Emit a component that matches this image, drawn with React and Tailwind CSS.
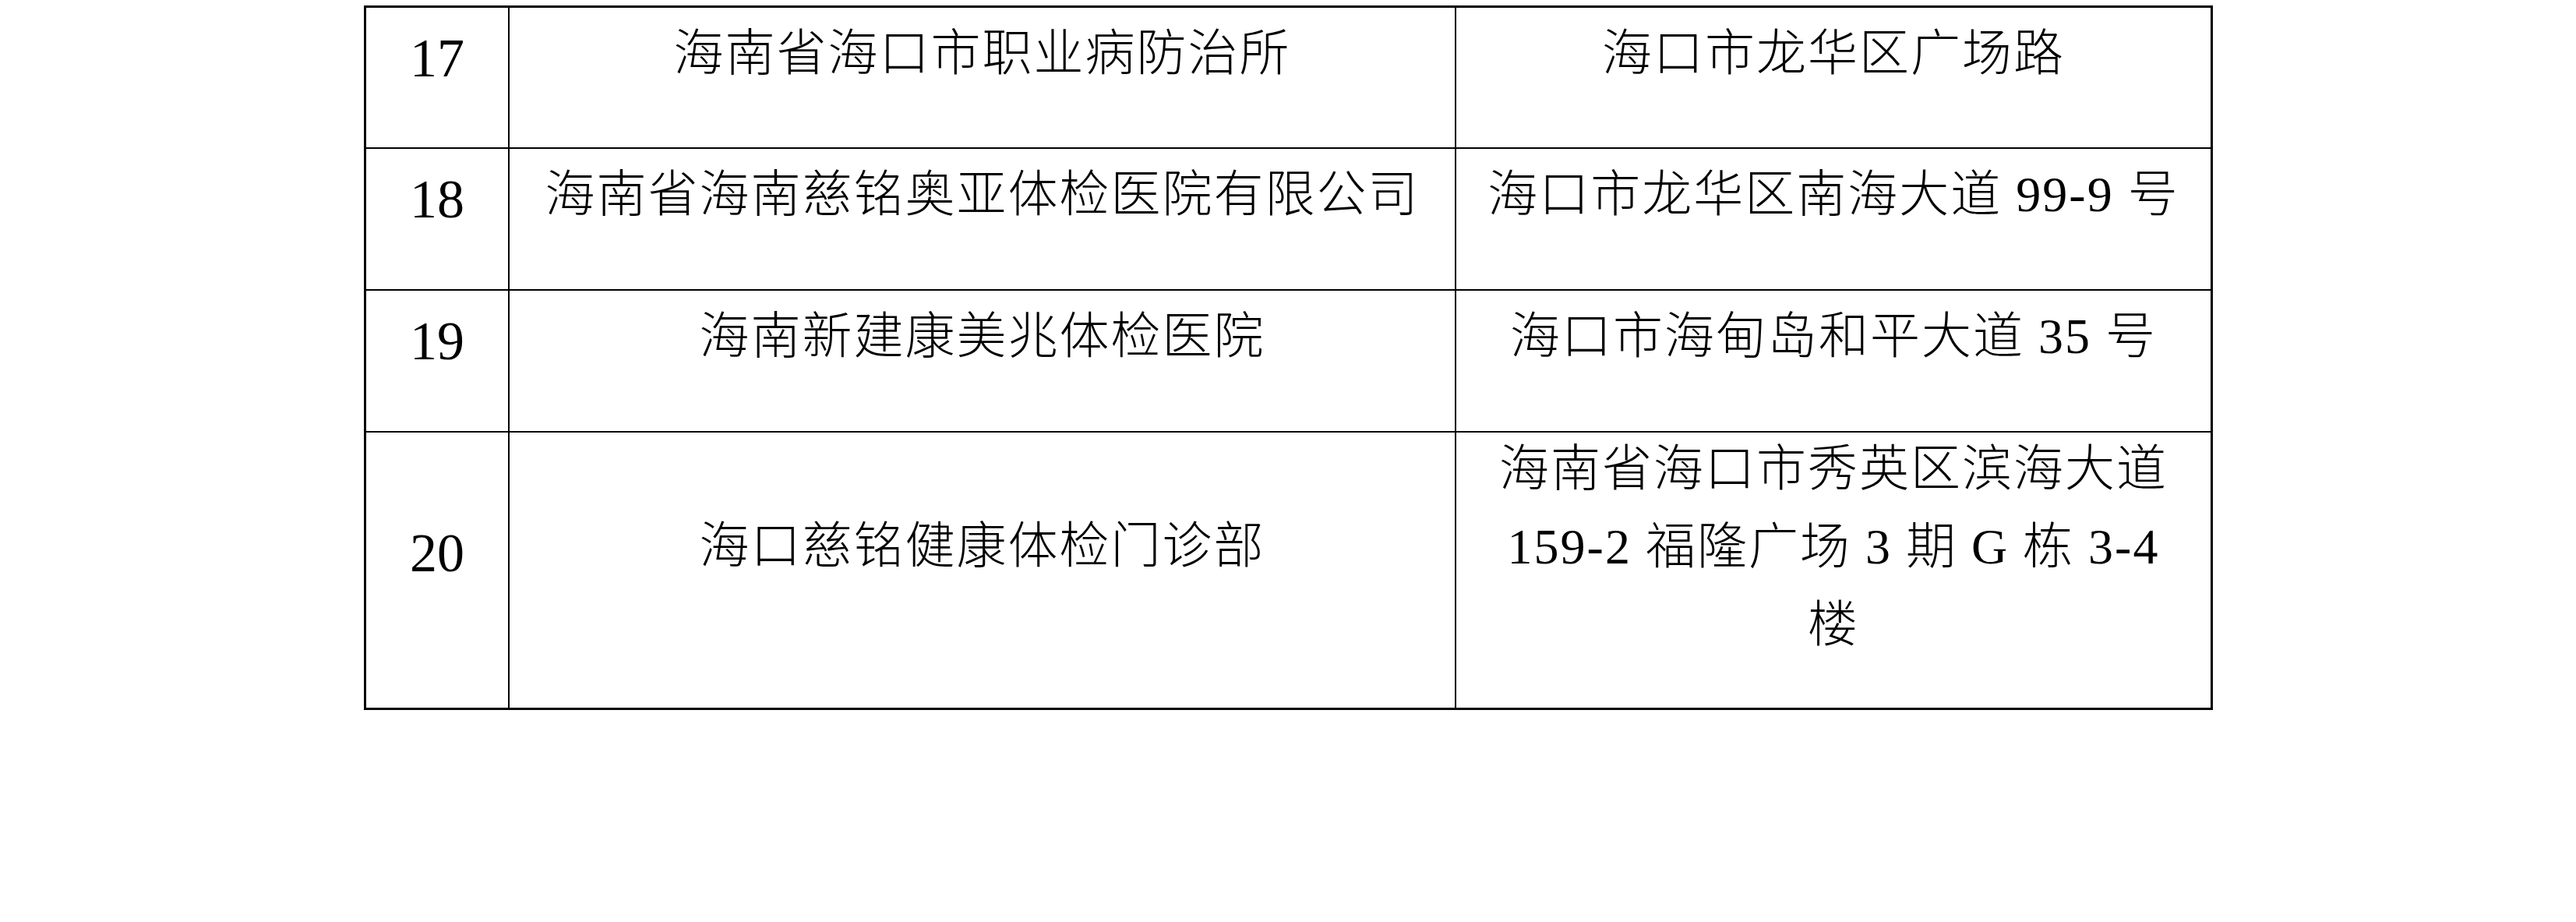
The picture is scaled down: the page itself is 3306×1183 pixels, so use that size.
const rows = [
  {
    no: "17",
    name: "海南省海口市职业病防治所",
    addr: ["海口市龙华区广场路"],
    h: "h-[181px] border-b-2",
    noPad: "pt-[15px]",
    namePad: "pt-[9px]",
    addrPad: "pt-[9px]",
  },
  {
    no: "18",
    name: "海南省海南慈铭奥亚体检医院有限公司",
    addr: ["海口市龙华区南海大道 99-9 号"],
    h: "h-[182px] border-b-2",
    noPad: "pt-[15px]",
    namePad: "pt-[9px]",
    addrPad: "pt-[9px]",
  },
  {
    no: "19",
    name: "海南新建康美兆体检医院",
    addr: ["海口市海甸岛和平大道 35 号"],
    h: "h-[182px] border-b-2",
    noPad: "pt-[15px]",
    namePad: "pt-[9px]",
    addrPad: "pt-[9px]",
  },
  {
    no: "20",
    name: "海口慈铭健康体检门诊部",
    addr: ["海南省海口市秀英区滨海大道", "159-2 福隆广场 3 期 G 栋 3-4", "楼"],
    h: "h-[353px]",
    noPad: "pt-[105px]",
    namePad: "pt-[96px]",
    addrPad: "pt-0 -mt-[3px]",
  },
];

const cjk = "font-['Liberation_Serif','Noto_Sans_CJK_SC',serif] font-light text-[64px] leading-[100px] tracking-[2px] text-black";

const App = () => {
  return (
    <div className="w-[3306px] h-[1183px] bg-white pl-[467px] pt-[7px]">
      <div className="w-[2373px] border-[3px] border-black">
        {rows.map((r) => (
          <div key={r.no} className={`grid grid-cols-[184px_1215px_1fr] border-black ${r.h}`}>
            <div className={`border-r-2 border-black text-center font-['Liberation_Serif',serif] text-[70px] leading-[100px] text-black ${r.noPad}`}>
              {r.no}
            </div>
            <div className={`border-r-2 border-black text-center ${cjk} ${r.namePad}`}>
              {r.name}
            </div>
            <div className={`text-center ${cjk} ${r.addrPad}`}>
              {r.addr.map((line) => (
                <div key={line} className="whitespace-nowrap">
                  {line}
                </div>
              ))}
            </div>
          </div>
        ))}
      </div>
    </div>
  );
};

export default App;
